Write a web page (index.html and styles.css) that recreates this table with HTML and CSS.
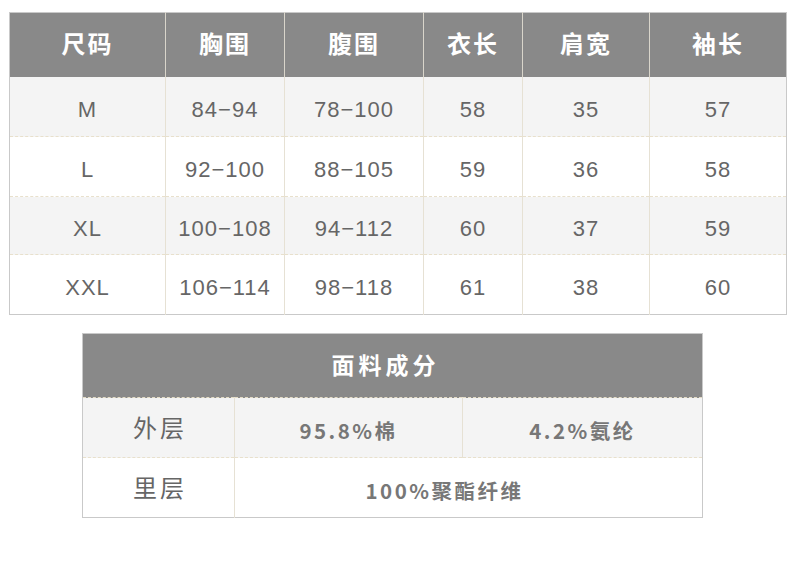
FILE: index.html
```html
<!DOCTYPE html>
<html lang="zh-CN">
<head>
<meta charset="utf-8">
<title>尺码表</title>
<link rel="stylesheet" href="styles.css">
</head>
<body>
<div class="page">
  <table class="size-table">
    <colgroup>
      <col class="c1"><col class="c2"><col class="c3"><col class="c4"><col class="c5"><col class="c6">
    </colgroup>
    <thead>
      <tr><th>尺码</th><th>胸围</th><th>腹围</th><th>衣长</th><th>肩宽</th><th>袖长</th></tr>
    </thead>
    <tbody>
      <tr class="shade"><td>M</td><td>84−94</td><td>78−100</td><td>58</td><td>35</td><td>57</td></tr>
      <tr><td>L</td><td>92−100</td><td>88−105</td><td>59</td><td>36</td><td>58</td></tr>
      <tr class="shade short"><td>XL</td><td>100−108</td><td>94−112</td><td>60</td><td>37</td><td>59</td></tr>
      <tr><td>XXL</td><td>106−114</td><td>98−118</td><td>61</td><td>38</td><td>60</td></tr>
    </tbody>
  </table>

  <table class="fabric-table">
    <colgroup>
      <col class="f1"><col class="f2"><col class="f3">
    </colgroup>
    <thead>
      <tr><th colspan="3">面料成分</th></tr>
    </thead>
    <tbody>
      <tr class="shade"><td class="label">外层</td><td class="val">95.8%棉</td><td class="val">4.2%氨纶</td></tr>
      <tr><td class="label">里层</td><td class="val wide" colspan="2">100%聚酯纤维</td></tr>
    </tbody>
  </table>
</div>
</body>
</html>
```

FILE: styles.css
```css
* { box-sizing: border-box; }
html, body { margin: 0; padding: 0; background: #ffffff; }
body { font-family: "Liberation Sans", "Noto Sans CJK SC", sans-serif; }

.page {
  display: flex;
  flex-direction: column;
  padding: 12px 0 0 9px;
}

table {
  border-collapse: collapse;
  table-layout: fixed;
}

/* ---------- size table ---------- */
.size-table {
  width: 777px;
  border: 1px solid #c9c9c9;
}
.size-table .c1 { width: 156px; }
.size-table .c2 { width: 119px; }
.size-table .c3 { width: 139px; }
.size-table .c4 { width: 99px; }
.size-table .c5 { width: 127px; }
.size-table .c6 { width: 137px; }

.size-table th {
  height: 64px;
  background: #898989;
  color: #ffffff;
  font-family: "Noto Sans CJK SC", sans-serif;
  font-weight: 700;
  font-size: 24px;
  padding: 0 0 4px;
  border-left: 1px solid #d9d5cb;
  letter-spacing: 2px;
}
.size-table th:first-child { border-left: none; }

.size-table td {
  height: 60px;
  text-align: center;
  color: #666666;
  font-size: 22px;
  padding: 7px 0 0;
  border-left: 1px solid #e6e1d4;
  border-top: 1px dashed #e8e0cc;
  letter-spacing: 1px;
}
.size-table tr.short td { height: 58px; }
.size-table tbody tr:first-child td { border-top: none; }
.size-table td:first-child { border-left: none; }
.size-table tr.shade td { background: #f4f4f4; }

/* ---------- fabric table ---------- */
.fabric-table {
  width: 620px;
  margin: 18px 0 0 73px;
  border: 1px solid #c9c9c9;
}
.fabric-table .f1 { width: 152px; }
.fabric-table .f2 { width: 228px; }
.fabric-table .f3 { width: 240px; }

.fabric-table th {
  height: 64px;
  background: #898989;
  color: #ffffff;
  font-family: "Noto Sans CJK SC", sans-serif;
  font-weight: 700;
  font-size: 23px;
  letter-spacing: 4px;
  padding: 0 14px 4px 0;
  border-bottom: 1px dashed #e4dcc6;
}

.fabric-table td {
  height: 60px;
  text-align: center;
  border-left: 1px solid #e6e1d4;
  border-top: 1px dashed #e8e0cc;
  padding: 0;
}
.fabric-table td:first-child { border-left: none; }
.fabric-table tbody tr:first-child td { border-top: none; }
.fabric-table tr.shade td { background: #f4f4f4; }

.fabric-table .label {
  font-family: "Noto Sans CJK SC", sans-serif;
  font-size: 24px;
  color: #666666;
  letter-spacing: 3px;
  padding: 0 0 2px 3px;
}
.fabric-table .val {
  font-family: "Noto Sans CJK SC", sans-serif;
  font-weight: 700;
  font-size: 20.5px;
  color: #777777;
  letter-spacing: 2.5px;
  padding-top: 4px;
}
.fabric-table .val.wide { padding-right: 48px; }
```
